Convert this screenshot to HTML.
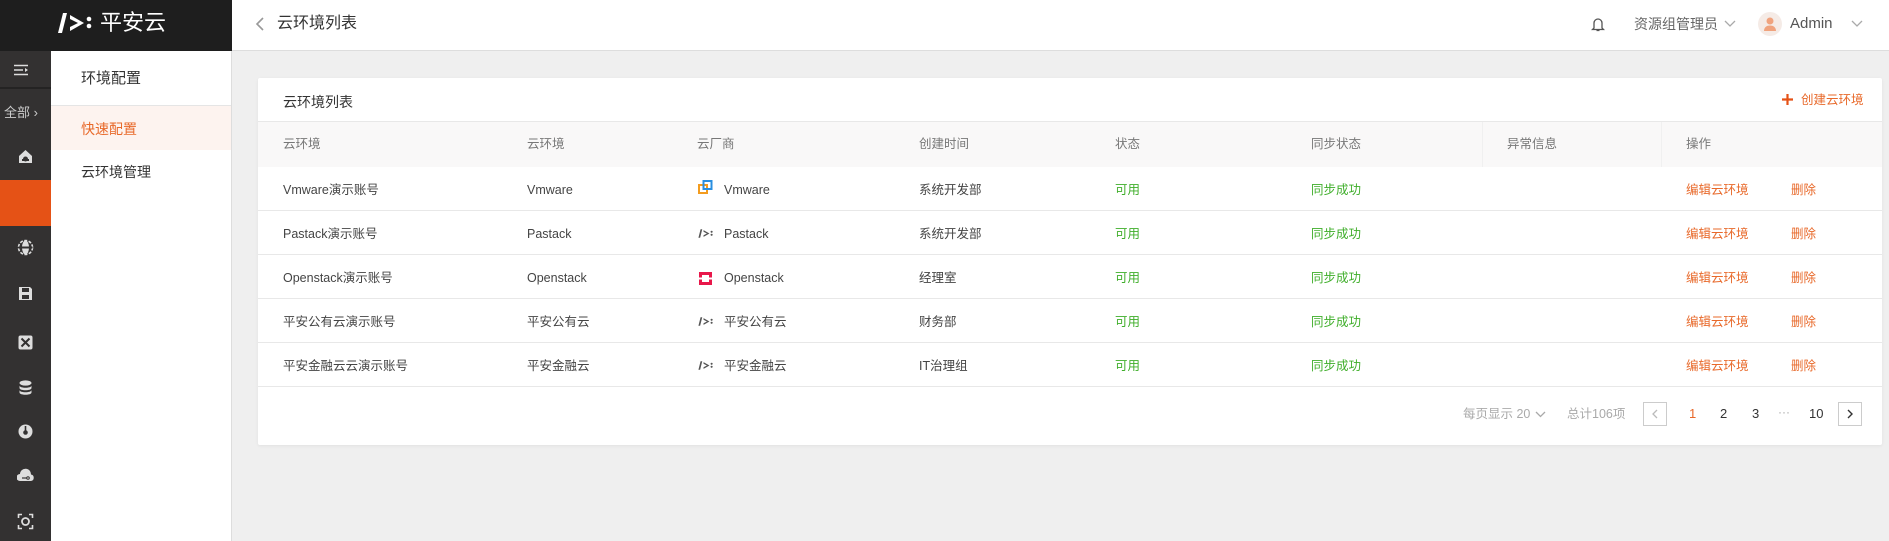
<!DOCTYPE html>
<html><head><meta charset="utf-8"><style>
*{margin:0;padding:0;box-sizing:border-box}
body{width:1889px;height:541px;overflow:hidden;background:#efefef;font-family:"Liberation Sans","Noto Sans CJK SC",sans-serif;position:relative;color:#333}
.a{position:absolute;white-space:nowrap;line-height:16px}
#top{position:absolute;left:0;top:0;width:1889px;height:51px;background:#fff;border-bottom:1px solid #ddd}
#logo{position:absolute;left:0;top:0;width:232px;height:51px;background:#1e1e1e}
#rail{position:absolute;left:0;top:51px;width:51px;height:490px;background:#333131}
#sub{position:absolute;left:51px;top:51px;width:181px;height:490px;background:#fff;border-right:1px solid #ddd}
#card{position:absolute;left:258px;top:78px;width:1624px;height:367px;background:#fff;border-radius:2px;box-shadow:0 1px 3px rgba(0,0,0,.06)}
.t{font-size:12.5px;color:#444}
.h{font-size:12.5px;color:#777}
.g{font-size:12.5px;color:#3fae2a}
.o{font-size:12.5px;color:#e8692a}
.line{position:absolute;left:0;width:1624px;height:1px;background:#e8e8e8}
.ic{position:absolute;left:17px;width:17px;height:17px}
</style></head><body>
<div id="top"></div>
<div id="logo">
<svg class="a" style="left:57px;top:11px" width="40" height="24" viewBox="0 0 40 24"><path d="M6 2h4L5 22H1z" fill="#fff"/><path d="M13 4l14 8-14 8v-4l8-4-8-4z" fill="#fff"/><circle cx="32" cy="8" r="2.3" fill="#fff"/><circle cx="32" cy="15" r="2.3" fill="#fff"/></svg>
<div class="a" style="left:100px;top:10px;font-size:22px;line-height:26px;color:#fff">平安云</div>
</div>
<svg class="a" style="left:255px;top:16px" width="10" height="16" viewBox="0 0 10 16"><path d="M8 2L2 8l6 6" stroke="#999" stroke-width="1.6" fill="none"/></svg>
<div class="a" style="left:277px;top:14px;font-size:16px;line-height:20px;color:#333">云环境列表</div>
<svg class="a" style="left:1591px;top:16px" width="14" height="16" viewBox="0 0 14 16"><path d="M3 12V7a4 4 0 018 0v5l1.5 1.5h-11z M5.5 14.5h3" stroke="#555" stroke-width="1.3" fill="none"/></svg>
<div class="a" style="left:1634px;top:15px;font-size:14px;line-height:18px;color:#666">资源组管理员</div>
<svg class="a" style="left:1724px;top:20px" width="12" height="8" viewBox="0 0 12 8"><path d="M1 1l5 5 5-5" stroke="#aaa" stroke-width="1.3" fill="none"/></svg>
<div class="a" style="left:1758px;top:12px;width:24px;height:24px;border-radius:50%;background:#f5ebe6"></div>
<svg class="a" style="left:1763px;top:16px" width="14" height="16" viewBox="0 0 14 16"><circle cx="7" cy="5" r="3.5" fill="#f0a37e"/><path d="M1 15c0-4 3-5.5 6-5.5s6 1.5 6 5.5z" fill="#f0a37e"/></svg>
<div class="a" style="left:1790px;top:15px;font-size:15px;line-height:18px;color:#555">Admin</div>
<svg class="a" style="left:1851px;top:20px" width="12" height="8" viewBox="0 0 12 8"><path d="M1 1l5 5 5-5" stroke="#aaa" stroke-width="1.3" fill="none"/></svg>

<div id="rail">
<svg class="a" style="left:13px;top:13px" width="16" height="12" viewBox="0 0 16 12"><path d="M1 1.5h14M1 6h9M1 10.5h14" stroke="#ddd" stroke-width="1.6"/><path d="M12 4l3 2-3 2z" fill="#ddd"/></svg>
<div class="a" style="left:0;top:36px;width:51px;height:2px;background:#242323"></div>
<div class="a" style="left:4px;top:54px;font-size:13px;color:#ccc">全部 ›</div>
<svg class="ic" style="top:97px" viewBox="0 0 17 17"><path d="M8.5 2L2 8v7h13V8z" fill="#ddd"/><circle cx="8.5" cy="11" r="2.5" fill="#333131"/><rect x="5" y="11" width="7" height="2" fill="#333131"/></svg>
<div class="a" style="left:0;top:129px;width:51px;height:46px;background:#e55216"></div>
<svg class="ic" style="top:188px" viewBox="0 0 17 17"><circle cx="8.5" cy="8.5" r="7" fill="none" stroke="#ddd" stroke-width="1.6" stroke-dasharray="3 1.5"/><ellipse cx="8.5" cy="8.5" rx="3.5" ry="7" fill="#ddd"/><rect x="1.5" y="7.5" width="14" height="2" fill="#333131"/></svg>
<svg class="ic" style="top:234px" viewBox="0 0 17 17"><path d="M2 2h11l2 2v11H2z" fill="#ddd"/><rect x="5" y="3" width="7" height="4" fill="#333131"/><rect x="5" y="10" width="7" height="4" fill="#333131"/></svg>
<svg class="ic" style="top:283px" viewBox="0 0 17 17"><rect x="1.5" y="1.5" width="14" height="14" rx="2" fill="#ddd"/><path d="M4.5 4.5l8 8M12.5 4.5l-8 8" stroke="#333131" stroke-width="2"/></svg>
<svg class="ic" style="top:328px" viewBox="0 0 17 17"><ellipse cx="8.5" cy="4" rx="6" ry="2.6" fill="#ddd"/><path d="M2.5 6.5c0 3 12 3 12 0v2.5c0 3-12 3-12 0zM2.5 11c0 3 12 3 12 0v2.5c0 3-12 3-12 0z" fill="#ddd"/></svg>
<svg class="ic" style="top:372px" viewBox="0 0 17 17"><circle cx="8.5" cy="8.5" r="7" fill="#ddd"/><circle cx="8.5" cy="9.5" r="2.3" fill="#333131"/><rect x="7.7" y="3" width="1.6" height="5" fill="#333131"/></svg>
<svg class="ic" style="top:416px" viewBox="0 0 17 17"><path d="M3 14a3.5 3.5 0 010-7 5.5 5.5 0 0111 .5 3.3 3.3 0 010 6.5z" fill="#ddd"/><path d="M5 11h5" stroke="#333131" stroke-width="1.2"/><circle cx="11" cy="11" r="1.3" fill="none" stroke="#333131"/></svg>
<svg class="ic" style="top:462px" viewBox="0 0 17 17"><path d="M1.5 5V1.5H5M12 1.5h3.5V5M15.5 12v3.5H12M5 15.5H1.5V12" stroke="#ddd" stroke-width="1.6" fill="none"/><circle cx="8.5" cy="8.5" r="3.5" fill="none" stroke="#ddd" stroke-width="1.8"/></svg>
</div>

<div id="sub">
<div class="a" style="left:30px;top:19px;font-size:15px;line-height:18px;color:#333">环境配置</div>
<div class="a" style="left:0;top:54px;width:180px;height:1px;background:#e5e5e5"></div>
<div class="a" style="left:0;top:55px;width:180px;height:44px;background:#fdf3ef"></div>
<div class="a" style="left:30px;top:69px;font-size:14px;line-height:18px;color:#e8692a">快速配置</div>
<div class="a" style="left:30px;top:112px;font-size:14px;line-height:18px;color:#333">云环境管理</div>
</div>

<div id="card">
<div class="a" style="left:25px;top:15px;font-size:14px;line-height:18px;color:#333">云环境列表</div>
<svg class="a" style="left:1524px;top:16px" width="11" height="11" viewBox="0 0 11 11"><path d="M5.5 0v11M0 5.5h11" stroke="#e55216" stroke-width="2.2"/></svg>
<div class="a o" style="left:1543px;top:14px">创建云环境</div>
<div class="line" style="top:43px"></div>
<div class="a" style="left:0;top:44px;width:1624px;height:45px;background:#f9f8f8"></div>
<div class="a" style="left:1224px;top:44px;width:1px;height:45px;background:#f0f0f0"></div>
<div class="a" style="left:1403px;top:44px;width:1px;height:45px;background:#f0f0f0"></div>
<div class="a h" style="left:25px;top:58px">云环境</div>
<div class="a h" style="left:269px;top:58px">云环境</div>
<div class="a h" style="left:439px;top:58px">云厂商</div>
<div class="a h" style="left:661px;top:58px">创建时间</div>
<div class="a h" style="left:857px;top:58px">状态</div>
<div class="a h" style="left:1053px;top:58px">同步状态</div>
<div class="a h" style="left:1249px;top:58px">异常信息</div>
<div class="a h" style="left:1428px;top:58px">操作</div>

<div class="line" style="top:132px"></div>
<div class="line" style="top:176px"></div>
<div class="line" style="top:220px"></div>
<div class="line" style="top:264px"></div>
<div class="line" style="top:308px"></div>

<div class="a t" style="left:25px;top:104px">Vmware演示账号</div>
<div class="a t" style="left:269px;top:104px">Vmware</div>
<svg class="a" style="left:440px;top:102px" width="15" height="15" viewBox="0 0 15 15"><rect x="1" y="5" width="8" height="8" fill="none" stroke="#f39c1f" stroke-width="2"/><rect x="5.5" y="1" width="8" height="8" fill="none" stroke="#2a8fe0" stroke-width="2"/></svg>
<div class="a t" style="left:466px;top:104px">Vmware</div>
<div class="a t" style="left:661px;top:104px">系统开发部</div>
<div class="a g" style="left:857px;top:104px">可用</div>
<div class="a g" style="left:1053px;top:104px">同步成功</div>
<div class="a o" style="left:1428px;top:104px">编辑云环境</div>
<div class="a o" style="left:1533px;top:104px">删除</div>

<div class="a t" style="left:25px;top:148px">Pastack演示账号</div>
<div class="a t" style="left:269px;top:148px">Pastack</div>
<svg class="a" style="left:440px;top:150px" width="17" height="11" viewBox="0 0 40 24"><path d="M6 2h4L5 22H1z" fill="#555"/><path d="M13 4l14 8-14 8v-4l8-4-8-4z" fill="#555"/><circle cx="32" cy="8" r="2.5" fill="#555"/><circle cx="32" cy="15" r="2.5" fill="#555"/></svg>
<div class="a t" style="left:466px;top:148px">Pastack</div>
<div class="a t" style="left:661px;top:148px">系统开发部</div>
<div class="a g" style="left:857px;top:148px">可用</div>
<div class="a g" style="left:1053px;top:148px">同步成功</div>
<div class="a o" style="left:1428px;top:148px">编辑云环境</div>
<div class="a o" style="left:1533px;top:148px">删除</div>

<div class="a t" style="left:25px;top:192px">Openstack演示账号</div>
<div class="a t" style="left:269px;top:192px">Openstack</div>
<svg class="a" style="left:441px;top:194px" width="13" height="13" viewBox="0 0 13 13"><rect x="0" y="0" width="13" height="13" fill="#e8174a"/><rect x="3" y="3" width="7" height="7" fill="#fff"/><rect x="0" y="5.5" width="13" height="2" fill="#fff"/></svg>
<div class="a t" style="left:466px;top:192px">Openstack</div>
<div class="a t" style="left:661px;top:192px">经理室</div>
<div class="a g" style="left:857px;top:192px">可用</div>
<div class="a g" style="left:1053px;top:192px">同步成功</div>
<div class="a o" style="left:1428px;top:192px">编辑云环境</div>
<div class="a o" style="left:1533px;top:192px">删除</div>

<div class="a t" style="left:25px;top:236px">平安公有云演示账号</div>
<div class="a t" style="left:269px;top:236px">平安公有云</div>
<svg class="a" style="left:440px;top:238px" width="17" height="11" viewBox="0 0 40 24"><path d="M6 2h4L5 22H1z" fill="#555"/><path d="M13 4l14 8-14 8v-4l8-4-8-4z" fill="#555"/><circle cx="32" cy="8" r="2.5" fill="#555"/><circle cx="32" cy="15" r="2.5" fill="#555"/></svg>
<div class="a t" style="left:466px;top:236px">平安公有云</div>
<div class="a t" style="left:661px;top:236px">财务部</div>
<div class="a g" style="left:857px;top:236px">可用</div>
<div class="a g" style="left:1053px;top:236px">同步成功</div>
<div class="a o" style="left:1428px;top:236px">编辑云环境</div>
<div class="a o" style="left:1533px;top:236px">删除</div>

<div class="a t" style="left:25px;top:280px">平安金融云云演示账号</div>
<div class="a t" style="left:269px;top:280px">平安金融云</div>
<svg class="a" style="left:440px;top:282px" width="17" height="11" viewBox="0 0 40 24"><path d="M6 2h4L5 22H1z" fill="#555"/><path d="M13 4l14 8-14 8v-4l8-4-8-4z" fill="#555"/><circle cx="32" cy="8" r="2.5" fill="#555"/><circle cx="32" cy="15" r="2.5" fill="#555"/></svg>
<div class="a t" style="left:466px;top:280px">平安金融云</div>
<div class="a t" style="left:661px;top:280px">IT治理组</div>
<div class="a g" style="left:857px;top:280px">可用</div>
<div class="a g" style="left:1053px;top:280px">同步成功</div>
<div class="a o" style="left:1428px;top:280px">编辑云环境</div>
<div class="a o" style="left:1533px;top:280px">删除</div>

<div class="a" style="left:1205px;top:328px;font-size:12.5px;color:#aaa">每页显示 20</div>
<svg class="a" style="left:1277px;top:333px" width="11" height="7" viewBox="0 0 11 7"><path d="M1 1l4.5 4.5L10 1" stroke="#aaa" stroke-width="1.3" fill="none"/></svg>
<div class="a" style="left:1309px;top:328px;font-size:12.5px;color:#aaa">总计106项</div>
<div class="a" style="left:1385px;top:324px;width:24px;height:24px;border:1px solid #ccc"></div>
<svg class="a" style="left:1393px;top:331px" width="8" height="10" viewBox="0 0 8 10"><path d="M6 1L2 5l4 4" stroke="#bbb" stroke-width="1.3" fill="none"/></svg>
<div class="a" style="left:1431px;top:328px;font-size:13px;color:#e8692a">1</div>
<div class="a" style="left:1462px;top:328px;font-size:13px;color:#333">2</div>
<div class="a" style="left:1494px;top:328px;font-size:13px;color:#333">3</div>
<div class="a" style="left:1520px;top:326px;font-size:12px;color:#aaa">···</div>
<div class="a" style="left:1551px;top:328px;font-size:13px;color:#333">10</div>
<div class="a" style="left:1580px;top:324px;width:24px;height:24px;border:1px solid #ccc"></div>
<svg class="a" style="left:1588px;top:331px" width="8" height="10" viewBox="0 0 8 10"><path d="M2 1l4 4-4 4" stroke="#333" stroke-width="1.4" fill="none"/></svg>
</div>
</body></html>
